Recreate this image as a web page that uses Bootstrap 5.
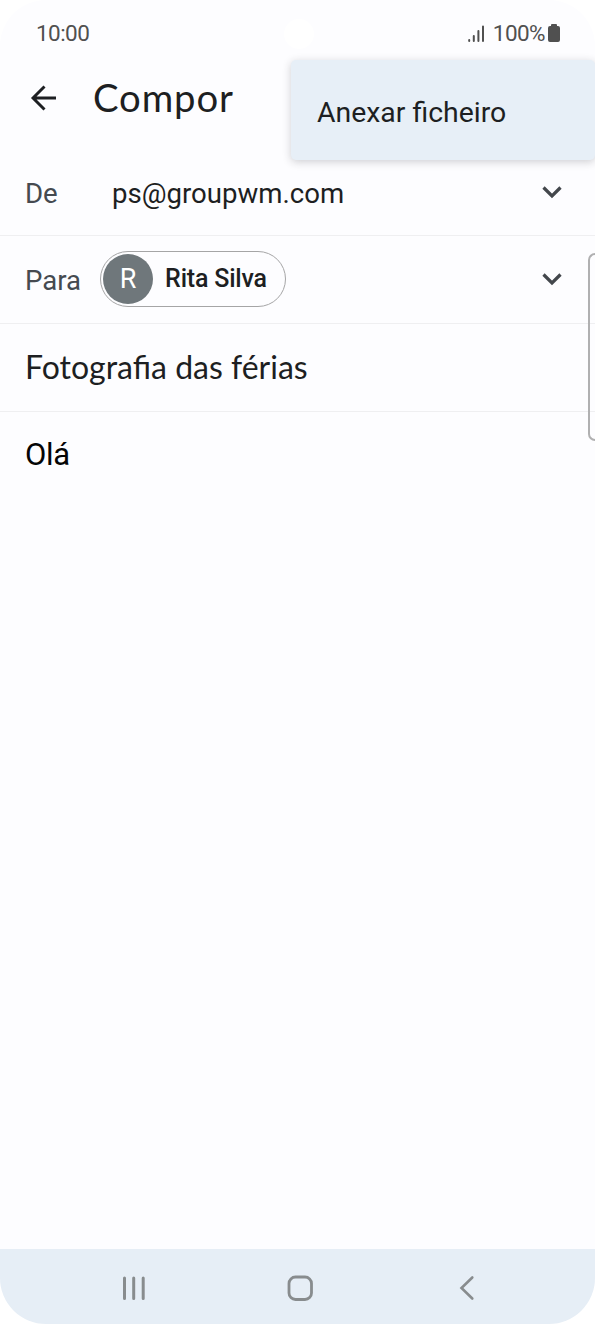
<!DOCTYPE html>
<html lang="pt">
<head>
<meta charset="utf-8">
<meta name="viewport" content="width=device-width, initial-scale=1">
<title>Compor</title>
<link href="https://cdn.jsdelivr.net/npm/bootstrap@5.3.0/dist/css/bootstrap.min.css" rel="stylesheet">
<style>
body{background:#fff;font-family:Roboto,"Liberation Sans",sans-serif;color:#1d1f22}
.phone{height:1324px;background:#fdfdff;border-radius:46px;line-height:1}
.phone svg{display:block;flex:none}
.status{height:66px;padding:0 35px 0 36px;color:#505050;font-size:22.5px;letter-spacing:-.55px}
.battery-level{margin:0 3px 0 8px}
.camera{left:284px;top:19px;width:30px;height:30px;background:#fff}
.topbar{height:84px;padding:0 30px 20px}
.page-title{font-family:Lato,sans-serif;font-size:38.3px;font-weight:400;margin:0 0 1px 36px;line-height:1;letter-spacing:.9px}
.line{border-bottom:1px solid #efeff1;padding:0 33.5px 0 25px}
.line-from{height:86px}
.line-field{height:88px}
.label{color:#454a50;font-size:27.6px;padding-top:2px}
.label-from{width:87px}
.addr{font-size:27.6px;padding-top:2px}
.chip{width:186px;height:56px;border:1.5px solid #a5a5a6;border-radius:28px;margin:-2px 0 0 19px;padding-left:2px;font-size:25px;font-weight:500;letter-spacing:-.2px}
.avatar{width:50px;height:50px;background:#6f777b;color:#fff;font-weight:400;font-size:27px;padding-top:1px;margin-right:12px}
.subject{font-family:Lato,sans-serif;font-size:32px;margin-top:-2px}
.message{padding:27px 25px;font-size:31px;color:#050505;letter-spacing:-.3px}
.popup{left:291px;top:60px;width:304px;height:100px;background:#e7eff7;border-radius:5px;box-shadow:0 2px 9px rgba(40,40,50,.22);padding:6px 0 0 26px;font-size:28.4px}
.handle{right:0;top:253px;width:7px;height:188px;border:2px solid #b0b0b1;border-right:0;border-radius:7px 0 0 7px}
.navkeys{height:75px;background:#e6eef6}
</style>
<script src="https://cdn.jsdelivr.net/npm/bootstrap@5.3.0/dist/js/bootstrap.bundle.min.js"></script>
</head>
<body>
<main class="phone position-relative overflow-hidden d-flex flex-column">
  <span class="camera position-absolute rounded-circle"></span>
  <div class="status d-flex align-items-center justify-content-between">
    <span>10:00</span>
    <div class="d-flex align-items-center">
      <svg width="17" height="17" viewBox="0 0 17 17" stroke="#505050" stroke-width="2" stroke-linecap="round"><path d="M1.200 15v1M5.800 11v5M10.400 6v10M15 1.500V16"/></svg>
      <span class="battery-level">100%</span>
      <svg width="12" height="18" viewBox="0 0 12 18" fill="#505050"><path d="M3 2V1q0-1 1-1h4q1 0 1 1v1h1q2 0 2 2v12q0 2-2 2H2q-2 0-2-2V4q0-2 2-2z"/></svg>
    </div>
  </div>
  <header class="topbar d-flex align-items-center">
    <svg width="27" height="26" viewBox="0 0 27 26" fill="none" stroke="#1d1f22" stroke-width="2.900"><path d="M26 13H3M14.500 1.500L3 13l11.500 11.500"/></svg>
    <h1 class="page-title">Compor</h1>
  </header>
  <div class="line line-from d-flex align-items-center">
    <span class="label label-from">De</span><span class="addr flex-grow-1">ps@groupwm.com</span>
    <svg width="20" height="13" viewBox="0 0 20 13" fill="none" stroke="#43474c" stroke-width="3.200"><path d="M1.500 1.500L10 10l8.500-8.500"/></svg>
  </div>
  <div class="line line-field d-flex align-items-center">
    <span class="label">Para</span>
    <div class="chip d-flex align-items-center"><span class="avatar rounded-circle d-flex align-items-center justify-content-center">R</span><span>Rita Silva</span></div>
    <svg class="ms-auto" width="20" height="13" viewBox="0 0 20 13" fill="none" stroke="#43474c" stroke-width="3.200"><path d="M1.500 1.500L10 10l8.500-8.500"/></svg>
  </div>
  <div class="line line-field d-flex align-items-center"><span class="subject">Fotografia das férias</span></div>
  <div class="message flex-grow-1">Olá</div>
  <nav class="navkeys d-flex align-items-center justify-content-between">
    <svg width="200" height="75" viewBox="0 0 200 75" stroke="#888c8e" stroke-width="3" stroke-linecap="round"><path d="M124.500 29v20.500M133.700 29v20.500M143.200 29v20.500"/></svg>
    <svg width="200" height="75" viewBox="200 0 200 75" fill="none" stroke="#888c8e" stroke-width="2.800"><rect x="289" y="28" width="22.500" height="22.500" rx="6.500"/></svg>
    <svg width="195" height="75" viewBox="400 0 195 75" fill="none" stroke="#888c8e" stroke-width="2.600" stroke-linecap="round"><path d="M472.300 28.500L461.500 39l10.800 10.500"/></svg>
  </nav>
  <div class="popup position-absolute d-flex align-items-center"><span>Anexar ficheiro</span></div>
  <span class="handle position-absolute"></span>
</main>
</body>
</html>
